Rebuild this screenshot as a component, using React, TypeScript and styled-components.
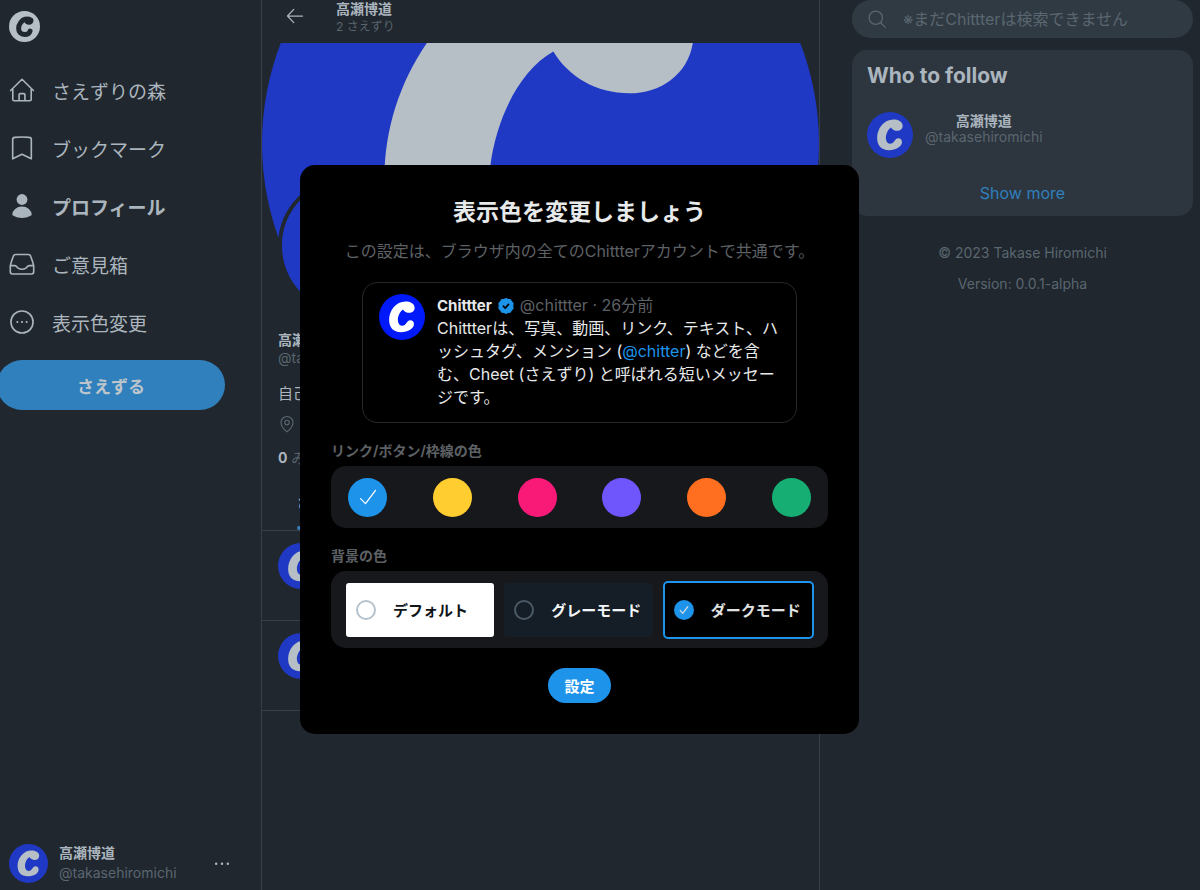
import React from "react";
import styled, { createGlobalStyle, css } from "styled-components";

const Global = createGlobalStyle`
  *, *::before, *::after { box-sizing: border-box; }
  body {
    margin: 0;
    background: #20272e;
    color: #abb5be;
    font-family: Inter, "Noto Sans CJK JP", sans-serif;
    font-size: 14px;
  }
  button { font: inherit; color: inherit; border: 0; padding: 0; background: none; cursor: pointer; }
  a { color: inherit; text-decoration: none; }
  p, h1, h2, fieldset, legend { margin: 0; padding: 0; border: 0; }
`;

const line = "#35404a";
const dim = "#5a6670";
const blue = "#1d93ea";

const C_PATH =
  "M77.500 30 C77 20 67 16.500 58 16.500 C36 16.500 22 37 22 56 C22 73 31 83 48 83 C63 83 76 75 76 66 C76 60 73 57 68 57 C60 57 60 69 50 69 C43 69 41 62 41 54 C42 46 46 37 52.300 33.500 C55 38 60 41 66 41 C72 41 77.500 37 77.500 30 Z";

const LogoSvg = styled.svg<{ $size: number }>`
  display: block;
  flex: none;
  width: ${(p) => p.$size}px;
  height: ${(p) => p.$size}px;
`;

function Logo({ size, disc = "#2039c4", mark = "#b6bfc6" }: { size: number; disc?: string; mark?: string }) {
  return (
    <LogoSvg $size={size} viewBox="0 0 100 100" aria-hidden="true">
      <circle cx="50" cy="50" r="50" fill={disc} />
      <path d={C_PATH} fill={mark} />
    </LogoSvg>
  );
}

function HomeLogo() {
  return (
    <LogoSvg $size={31} viewBox="0 0 100 100" aria-hidden="true">
      <circle cx="50" cy="50" r="50" fill="#b6bfc6" />
      <path
        d="M71 30C67 26 61 25 56 26C41 28 31 43 31 56C31 68 39 76 50 76C59 76 66 72 68 65M71 30C71 37 60 39 57 32"
        fill="none"
        stroke="#20272e"
        strokeWidth="16"
        strokeLinecap="round"
        strokeLinejoin="round"
      />
    </LogoSvg>
  );
}

const IconSvg = styled.svg<{ $size: number }>`
  display: block;
  flex: none;
  width: ${(p) => p.$size}px;
  height: ${(p) => p.$size}px;
  fill: none;
  stroke: currentColor;
  stroke-linecap: round;
  stroke-linejoin: round;
`;

function Icon({ size = 26, stroke = 1.5, children }: { size?: number; stroke?: number; children: React.ReactNode }) {
  return (
    <IconSvg $size={size} viewBox="0 0 24 24" strokeWidth={stroke} aria-hidden="true">
      {children}
    </IconSvg>
  );
}

const Page = styled.div`
  display: grid;
  grid-template-columns: 261px minmax(0, 1fr) 380px;
  min-height: 100vh;
`;

/* Left navigation */
const Sidebar = styled.header`
  display: flex;
  flex-direction: column;
  padding: 11px 0 7px;
`;
const HomeLink = styled.a`
  align-self: flex-start;
  margin: 0 0 19px 9px;
`;
const NavItem = styled.a<{ $active?: boolean }>`
  display: flex;
  align-items: center;
  gap: 17px;
  height: 58px;
  padding-left: 9px;
  font-size: 19px;
  font-weight: ${(p) => (p.$active ? 700 : 400)};
`;
const PostButton = styled.button`
  height: 50px;
  width: 228px;
  margin: 9px 0 0 -3px;
  border-radius: 25px;
  background: #3080bd;
  color: #bcc5cc;
  font-size: 17px;
  font-weight: 700;
`;
const Account = styled.button`
  display: flex;
  align-items: center;
  gap: 11px;
  margin: auto 29px 0 9px;
  text-align: left;
`;
const Names = styled.span<{ $center?: boolean }>`
  display: flex;
  flex-direction: column;
  flex: ${(p) => (p.$center ? "none" : 1)};
  text-align: ${(p) => (p.$center ? "center" : "left")};
`;
const Name = styled.strong<{ $line?: number }>`
  font-size: 14px;
  line-height: ${(p) => p.$line ?? 20}px;
  font-weight: 700;
`;
const Handle = styled.span<{ $line?: number; $small?: boolean }>`
  font-size: ${(p) => (p.$small ? 12 : 14)}px;
  line-height: ${(p) => p.$line ?? 20}px;
  color: ${dim};
`;

/* Profile column */
const Main = styled.main`
  border: solid ${line};
  border-width: 0 1px;
`;
const TopBar = styled.div`
  display: flex;
  align-items: flex-start;
  gap: 31px;
  height: 43px;
  padding: 0 23px;
`;
const BackButton = styled.button`
  margin-top: 6px;
`;
const Banner = styled.div`
  height: 200px;
  overflow: hidden;
  display: flex;
  align-items: center;
  svg { width: 100%; height: auto; }
`;
const Profile = styled.section`
  padding: 0 16px;
`;
const ProfileAvatar = styled.div`
  position: relative;
  width: 140px;
  margin-top: -67px;
  border: 4px solid #20272e;
  border-radius: 50%;
`;
const ProfileText = styled.div`
  display: flex;
  flex-direction: column;
  margin-top: 15px;
`;
const Bio = styled.p`
  margin-top: 16px;
  font-size: 15px;
  line-height: 22px;
`;
const Place = styled.p`
  display: flex;
  align-items: center;
  height: 20px;
  margin-top: 9px;
  color: ${dim};
`;
const Counts = styled.p`
  margin-top: 13px;
  line-height: 22px;
  color: ${dim};
  b { color: #abb5be; }
`;
const Tabs = styled.div`
  display: flex;
  height: 62px;
  padding-left: 35px;
  border-bottom: 1px solid ${line};
`;
const Tab = styled.button`
  display: flex;
  flex-direction: column;
  justify-content: flex-end;
  flex: none;
  font-weight: 700;
  line-height: 22px;
  &::after {
    content: "";
    height: 4px;
    margin-top: 12px;
    border-radius: 2px;
    background: #3080bd;
  }
`;
const Post = styled.article`
  height: 90px;
  padding: 12px 16px;
  border-bottom: 1px solid ${line};
`;

/* Right column */
const Aside = styled.aside`
  padding: 0 7px 0 32px;
`;
const Search = styled.label`
  display: flex;
  align-items: center;
  gap: 16px;
  height: 38px;
  padding: 0 15px;
  border-radius: 19px;
  background: #303a43;
  color: ${dim};
`;
const SearchInput = styled.input`
  flex: 1;
  min-width: 0;
  padding: 0;
  border: 0;
  outline: 0;
  background: none;
  color: #abb5be;
  font: inherit;
  font-size: 16px;
  &::placeholder { color: ${dim}; opacity: 1; }
`;
const Card = styled.section`
  margin-top: 12px;
  padding: 14px 15px 12px;
  border-radius: 15px;
  background: #2d353e;
`;
const CardTitle = styled.h2`
  font-size: 21px;
  line-height: 24px;
`;
const Suggestion = styled.a`
  display: flex;
  gap: 12px;
  align-items: flex-start;
  margin-top: 24px;
`;
const ShowMore = styled.a`
  display: block;
  margin-top: 24px;
  text-align: center;
  font-size: 16px;
  line-height: 22px;
  color: #3080bd;
`;
const Legal = styled.footer`
  margin-top: 21px;
  text-align: center;
  line-height: 31px;
  color: ${dim};
`;

/* Display settings dialog */
const Overlay = styled.div`
  position: fixed;
  inset: 0;
  display: flex;
  align-items: center;
  justify-content: center;
  padding: 9px 41px 0 0;
`;
const Dialog = styled.form`
  display: flex;
  flex-direction: column;
  align-items: center;
  width: 559px;
  max-width: 100%;
  padding: 31px;
  border-radius: 15px;
  background: #000;
  color: #e7e9ea;
`;
const Title = styled.h1`
  font-size: 23px;
  line-height: 32px;
`;
const Lead = styled.p`
  margin-top: 12px;
  font-size: 16px;
  line-height: 22px;
  color: #5d6165;
`;
const Sample = styled.article`
  display: flex;
  gap: 12px;
  width: 435px;
  max-width: 100%;
  margin-top: 20px;
  padding: 11px 16px 13px;
  border: 1px solid #25282b;
  border-radius: 15px;
`;
const SampleBody = styled.div`
  flex: 1;
  font-size: 16px;
  line-height: 23px;
`;
const SampleHead = styled.div`
  display: flex;
  align-items: center;
  gap: 6px;
  color: #5d6165;
  b { color: #e7e9ea; font-size: 15px; }
`;
const Mention = styled.a`
  color: ${blue};
`;
const Group = styled.fieldset`
  width: 100%;
  margin-top: 17px;
`;
const GroupLabel = styled.legend`
  font-size: 14px;
  line-height: 22px;
  font-weight: 700;
  color: #5d6165;
`;
const Panel = styled.div<{ $tall?: boolean }>`
  display: flex;
  align-items: center;
  justify-content: space-between;
  gap: 10px;
  height: ${(p) => (p.$tall ? 77 : 62)}px;
  margin-top: 4px;
  padding: ${(p) => (p.$tall ? "0 14px 0 15px" : "0 17px")};
  border-radius: 15px;
  background: #16181c;
`;
const hiddenInput = css`
  input { position: absolute; inset: 0; width: 100%; height: 100%; margin: 0; opacity: 0; cursor: pointer; }
`;
const Swatch = styled.label<{ $color: string }>`
  position: relative;
  display: flex;
  align-items: center;
  justify-content: center;
  width: 39px;
  height: 39px;
  border-radius: 50%;
  background: ${(p) => p.$color};
  color: #fff;
  ${hiddenInput}
`;
const Mode = styled.label<{ $bg: string; $fg: string; $on?: boolean }>`
  position: relative;
  display: flex;
  align-items: center;
  flex: 1;
  gap: 17px;
  height: ${(p) => (p.$on ? 58 : 54)}px;
  padding-left: ${(p) => (p.$on ? 9 : 10)}px;
  border: ${(p) => (p.$on ? `2px solid ${blue}` : 0)};
  border-radius: ${(p) => (p.$on ? 5 : 3)}px;
  background: ${(p) => p.$bg};
  color: ${(p) => p.$fg};
  font-size: 15px;
  font-weight: 700;
  white-space: nowrap;
  ${hiddenInput}
`;
const Dot = styled.span<{ $ring?: string }>`
  display: flex;
  align-items: center;
  justify-content: center;
  flex: none;
  width: 20px;
  height: 20px;
  border-radius: 50%;
  border: ${(p) => (p.$ring ? `2px solid ${p.$ring}` : 0)};
  background: ${(p) => (p.$ring ? "none" : blue)};
  color: #d5dde3;
`;
const Submit = styled.button`
  height: 35px;
  margin-top: 20px;
  padding: 0 16px;
  border-radius: 18px;
  background: ${blue};
  color: #fff;
  font-size: 15px;
  font-weight: 700;
`;

const swatches = [
  ["青", "#1d93ea"],
  ["黄", "#ffcd30"],
  ["ピンク", "#f91a78"],
  ["紫", "#6f55fc"],
  ["オレンジ", "#ff6f1f"],
  ["緑", "#17ae73"],
];

const modes = [
  { label: "デフォルト", bg: "#fff", fg: "#0f1419", ring: "#b4c3cd" },
  { label: "グレーモード", bg: "#151d26", fg: "#f3f5f6", ring: "#4c5a66" },
  { label: "ダークモード", bg: "#000", fg: "#e0e2e3", ring: undefined },
];

export default function App() {
  return (
    <>
      <Global />
      <Page>
        <Sidebar>
          <HomeLink href="#" aria-label="Chittter">
            <HomeLogo />
          </HomeLink>
          <nav>
            <NavItem href="#">
              <Icon>
                <path d="m1.500 12.500 10.500-10.400 10.500 10.400M3.500 11v9.700a1.200 1.200 0 0 0 1.200 1.200h14.600a1.200 1.200 0 0 0 1.200-1.200V11M9.300 21.900v-5.500a1 1 0 0 1 1-1h3.400a1 1 0 0 1 1 1v5.500" />
              </Icon>
              さえずりの森
            </NavItem>
            <NavItem href="#">
              <Icon>
                <path d="M3.400 22V4.200c0-1.100.8-1.900 1.900-2 4.500-.5 9-.5 13.400 0 1.100.1 1.900.9 1.900 2V22L12 17.800 3.400 22Z" />
              </Icon>
              ブックマーク
            </NavItem>
            <NavItem href="#" $active>
              <Icon stroke={0}>
                <circle cx="12" cy="6" r="5" fill="currentColor" />
                <path d="M3 20.300a9 7.800 0 0 1 18 0C18.500 22.300 15 23 12 23s-6.500-.7-9-2.700Z" fill="currentColor" />
              </Icon>
              プロフィール
            </NavItem>
            <NavItem href="#">
              <Icon>
                <path d="M1.200 13.500h4.200c1.500 0 1.600 1.200 2.700 2.100 2.300 1.500 5.500 1.500 7.800 0 1.100-.9 1.200-2.100 2.700-2.100h4.200M1.200 13.900v5.300c0 1.200.9 2 2 2h17.600c1.100 0 2-.8 2-2v-5.300c0-1.200-2-6.900-2.800-9.100-.3-1-1.100-1.600-2.200-1.600H6.200c-1.100 0-1.900.6-2.200 1.600-.8 2.200-2.800 7.900-2.800 9.100Z" />
              </Icon>
              ご意見箱
            </NavItem>
            <NavItem href="#">
              <Icon>
                <circle cx="12" cy="12" r="10.200" />
                <path d="M7.700 12h.01M12 12h.01M16.300 12h.01" strokeWidth="2" />
              </Icon>
              表示色変更
            </NavItem>
          </nav>
          <PostButton type="button">さえずる</PostButton>
          <Account type="button">
            <Logo size={39} />
            <Names>
              <Name>高瀬博道</Name>
              <Handle>@takasehiromichi</Handle>
            </Names>
            <Icon size={20} stroke={3}>
              <path d="M5 13h.01M12 13h.01M19 13h.01" />
            </Icon>
          </Account>
        </Sidebar>

        <Main>
          <TopBar>
            <BackButton type="button" aria-label="戻る">
              <Icon size={20}>
                <path d="M21 12H3M10.500 4 3 12l7.500 8" />
              </Icon>
            </BackButton>
            <Names>
              <Name $line={18}>高瀬博道</Name>
              <Handle $line={18} $small>2 さえずり</Handle>
            </Names>
          </TopBar>
          <Banner>
            <Logo size={558} />
          </Banner>
          <Profile>
            <ProfileAvatar>
              <Logo size={132} />
            </ProfileAvatar>
            <ProfileText>
              <Name $line={18}>高瀬博道</Name>
              <Handle $line={18}>@takasehiromichi</Handle>
            </ProfileText>
            <Bio>自己紹介</Bio>
            <Place>
              <Icon size={18}>
                <path d="M12 22.500s8-6.500 8-12.500a8 8 0 0 0-16 0c0 6 8 12.500 8 12.500Z" />
                <circle cx="12" cy="10" r="3" />
              </Icon>
            </Place>
            <Counts>
              <b>0</b> みてる
            </Counts>
          </Profile>
          <Tabs>
            <Tab type="button">さえずり</Tab>
          </Tabs>
          <Post>
            <Logo size={46} />
          </Post>
          <Post>
            <Logo size={46} />
          </Post>
        </Main>

        <Aside>
          <Search>
            <Icon size={20}>
              <circle cx="10.500" cy="10.500" r="8" />
              <path d="m16.500 16.500 5.500 5.500" />
            </Icon>
            <SearchInput type="search" aria-label="検索" placeholder="※まだChittterは検索できません" />
          </Search>
          <Card>
            <CardTitle>Who to follow</CardTitle>
            <Suggestion href="#">
              <Logo size={46} />
              <Names $center>
                <Name $line={18}>高瀬博道</Name>
                <Handle $line={14}>@takasehiromichi</Handle>
              </Names>
            </Suggestion>
            <ShowMore href="#">Show more</ShowMore>
          </Card>
          <Legal>
            <p>© 2023 Takase Hiromichi</p>
            <p>Version: 0.0.1-alpha</p>
          </Legal>
        </Aside>
      </Page>

      <Overlay>
        <Dialog role="dialog" aria-labelledby="display-title" onSubmit={(e) => e.preventDefault()}>
          <Title id="display-title">表示色を変更しましょう</Title>
          <Lead>この設定は、ブラウザ内の全てのChittterアカウントで共通です。</Lead>
          <Sample>
            <Logo size={46} disc="#0019fb" mark="#fff" />
            <SampleBody>
              <SampleHead>
                <b>Chittter</b>
                <Icon size={16} stroke={2}>
                  <path
                    d="M12 1l3 1.400 3.400.2 1.800 3 2.300 2.500-.5 3.900.5 3.400-2.300 2.500-1.800 3.100-3.400.4L12 23l-3-1.600-3.400-.4-1.800-3.100-2.300-2.500.5-3.400-.5-3.900 2.300-2.500 1.800-3L9 2.400Z"
                    fill={blue}
                    stroke={blue}
                  />
                  <path d="m8 12.300 2.800 2.800 5-5.500" stroke="#000" strokeWidth="2.500" />
                </Icon>
                <span>@chittter · 26分前</span>
              </SampleHead>
              <p>
                Chittterは、写真、動画、リンク、テキスト、ハッシュタグ、メンション (<Mention href="#">@chitter</Mention>)
                などを含む、Cheet (さえずり) と呼ばれる短いメッセージです。
              </p>
            </SampleBody>
          </Sample>

          <Group>
            <GroupLabel>リンク/ボタン/枠線の色</GroupLabel>
            <Panel>
              {swatches.map(([name, color], i) => (
                <Swatch key={name} $color={color}>
                  <input type="radio" name="accent" aria-label={name} defaultChecked={i === 0} />
                  {i === 0 && (
                    <Icon size={20}>
                      <path d="m3 14 6 6L21 4" />
                    </Icon>
                  )}
                </Swatch>
              ))}
            </Panel>
          </Group>

          <Group>
            <GroupLabel>背景の色</GroupLabel>
            <Panel $tall>
              {modes.map((m) => (
                <Mode key={m.label} $bg={m.bg} $fg={m.fg} $on={!m.ring}>
                  <input type="radio" name="background" defaultChecked={!m.ring} />
                  <Dot $ring={m.ring}>
                    {!m.ring && (
                      <Icon size={10} stroke={3}>
                        <path d="m3 13 6 7L21 4" />
                      </Icon>
                    )}
                  </Dot>
                  {m.label}
                </Mode>
              ))}
            </Panel>
          </Group>
          <Submit type="submit">設定</Submit>
        </Dialog>
      </Overlay>
    </>
  );
}
